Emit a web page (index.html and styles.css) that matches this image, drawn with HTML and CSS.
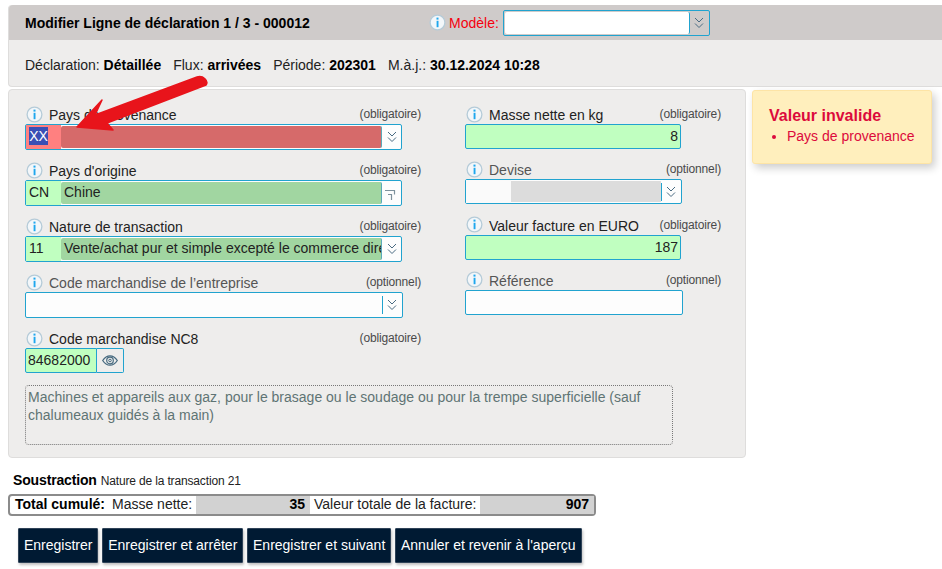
FILE: index.html
```html
<!DOCTYPE html>
<html lang="fr">
<head>
<meta charset="utf-8">
<title>Modifier Ligne de déclaration</title>
<link rel="stylesheet" href="styles.css">
</head>
<body>
<svg class="defs" width="0" height="0" aria-hidden="true">
  <symbol id="info" viewBox="0 0 17 17">
    <circle cx="8.5" cy="8.5" r="7.4" fill="#f3f7fa" stroke="#b5cbd8" stroke-width="1.3"/>
    <rect x="7.5" y="3.6" width="2" height="2" fill="#1ea7ee"/>
    <rect x="7.6" y="6.8" width="1.9" height="6.4" fill="#1ea7ee"/>
  </symbol>
  <symbol id="chev" viewBox="0 0 10 12">
    <path d="M1 1 5 5 9 1M1 6.500l4 4 4-4" fill="none" stroke="#4a6b82" stroke-width="1"/>
  </symbol>
  <symbol id="corner" viewBox="0 0 12 12">
    <path d="M1 1.500h9.500v4M4 5.500h3.500v5.500" fill="none" stroke="#7d919c" stroke-width="1.200"/>
  </symbol>
</svg>

<section class="head">
  <div class="head-title">
    <h1 class="title">Modifier Ligne de déclaration 1 / 3 - 000012</h1>
    <div class="model">
      <svg class="info"><use href="#info"/></svg>
      <span class="model-label">Modèle:</span>
      <div class="combo combo-model">
        <span class="model-input"></span>
        <span class="combo-btn"><svg class="chev"><use href="#chev"/></svg></span>
      </div>
    </div>
  </div>
  <p class="head-meta">
    <span>Déclaration: <b>Détaillée</b></span>
    <span>Flux: <b>arrivées</b></span>
    <span>Période: <b>202301</b></span>
    <span>M.à.j.: <b>30.12.2024 10:28</b></span>
  </p>
</section>

<div class="content">
  <section class="panel">
    <div class="cols">
      <div class="col col-left">
        <div class="field">
          <div class="label"><svg class="info"><use href="#info"/></svg><span class="name">Pays de provenance</span><span class="req">(obligatoire)</span></div>
          <div class="combo combo-wide">
            <span class="code code-bad"><span class="selected">XX</span></span>
            <span class="desc desc-bad"></span>
            <span class="combo-btn"><svg class="chev"><use href="#chev"/></svg></span>
          </div>
        </div>
        <div class="field">
          <div class="label"><svg class="info"><use href="#info"/></svg><span class="name">Pays d'origine</span><span class="req">(obligatoire)</span></div>
          <div class="combo combo-wide">
            <span class="code code-ok">CN</span>
            <span class="desc desc-ok">Chine</span>
            <span class="combo-btn"><svg class="corner"><use href="#corner"/></svg></span>
          </div>
        </div>
        <div class="field">
          <div class="label"><svg class="info"><use href="#info"/></svg><span class="name">Nature de transaction</span><span class="req">(obligatoire)</span></div>
          <div class="combo combo-wide">
            <span class="code code-ok">11</span>
            <span class="desc desc-ok">Vente/achat pur et simple excepté le commerce direct avec/par les consommateurs</span>
            <span class="combo-btn"><svg class="chev"><use href="#chev"/></svg></span>
          </div>
        </div>
        <div class="field">
          <div class="label label-opt"><svg class="info"><use href="#info"/></svg><span class="name">Code marchandise de l’entreprise</span><span class="req">(optionnel)</span></div>
          <div class="combo combo-wider combo-empty">
            <span class="blank"></span>
            <span class="combo-btn combo-btn-line"><svg class="chev"><use href="#chev"/></svg></span>
          </div>
        </div>
        <div class="field">
          <div class="label"><svg class="info"><use href="#info"/></svg><span class="name">Code marchandise NC8</span><span class="req">(obligatoire)</span></div>
          <div class="nc8">
            <span class="nc8-code">84682000</span>
            <span class="nc8-btn">
              <svg class="eye" viewBox="0 0 16 11" aria-hidden="true">
                <path d="M.7 5.500C3 2 5.500.8 8 .8s5 1.200 7.300 4.700C13 9 10.500 10.200 8 10.200S3 9 .7 5.500Z" fill="none" stroke="#46697f" stroke-width="1.300"/>
                <circle cx="8" cy="5.500" r="3.300" fill="none" stroke="#46697f" stroke-width="1.200"/>
                <circle cx="8" cy="5.500" r="1.300" fill="none" stroke="#46697f" stroke-width="1"/>
              </svg>
            </span>
          </div>
        </div>
      </div>
      <div class="col col-right">
        <div class="field-r">
          <div class="label"><svg class="info"><use href="#info"/></svg><span class="name">Masse nette en kg</span><span class="req">(obligatoire)</span></div>
          <div class="num">8</div>
        </div>
        <div class="field-r">
          <div class="label label-opt"><svg class="info"><use href="#info"/></svg><span class="name">Devise</span><span class="req">(optionnel)</span></div>
          <div class="combo combo-devise">
            <span class="dev-code"></span>
            <span class="dev-desc"></span>
            <span class="combo-btn combo-btn-line"><svg class="chev"><use href="#chev"/></svg></span>
          </div>
        </div>
        <div class="field-r">
          <div class="label"><svg class="info"><use href="#info"/></svg><span class="name">Valeur facture en EURO</span><span class="req">(obligatoire)</span></div>
          <div class="num">187</div>
        </div>
        <div class="field-r">
          <div class="label label-opt"><svg class="info"><use href="#info"/></svg><span class="name">Référence</span><span class="req">(optionnel)</span></div>
          <div class="text-input"></div>
        </div>
      </div>
    </div>
    <div class="note">Machines et appareils aux gaz, pour le brasage ou le soudage ou pour la trempe superficielle (sauf chalumeaux guidés à la main)</div>
  </section>

  <aside class="alert">
    <h2 class="alert-title">Valeur invalide</h2>
    <ul class="alert-list"><li>Pays de provenance</li></ul>
  </aside>
</div>

<p class="sub"><b class="sub-head">Soustraction</b> <span class="sub-text">Nature de la transaction 21</span></p>

<div class="totals">
  <b class="tot-label">Total cumulé:</b>
  <span class="tot-key tot-key-1">Masse nette:</span>
  <b class="tot-val tot-val-1">35</b>
  <span class="tot-key tot-key-2">Valeur totale de la facture:</span>
  <b class="tot-val tot-val-2">907</b>
</div>

<div class="actions">
  <button class="btn" type="button">Enregistrer</button>
  <button class="btn" type="button">Enregistrer et arrêter</button>
  <button class="btn" type="button">Enregistrer et suivant</button>
  <button class="btn" type="button">Annuler et revenir à l'aperçu</button>
</div>

<svg class="arrow" viewBox="0 0 150 60" aria-hidden="true">
  <path d="M11 52 36 25 29 40 131 2C137 0 143 6 140 10L41 48 47 55Z" fill="#e8141b" stroke="#e8141b" stroke-width="1.500" stroke-linejoin="round"/>
</svg>
</body>
</html>
```
FILE: styles.css
```css
* { box-sizing: border-box; }
html, body { margin: 0; padding: 0; }
body {
  position: relative;
  width: 942px;
  height: 569px;
  overflow: hidden;
  padding: 5px 0 0 8px;
  background: #fff;
  color: #000;
  font-family: "Liberation Sans", Arial, sans-serif;
  font-size: 14px;
}
.defs { position: absolute; }

.head {
  height: 82px;
  background: #eeedec;
  border-radius: 4px 0 0 4px;
  border-bottom: 1px solid #dedddc;
  border-left: 1px solid #dedddc;
}
.head-title {
  display: flex;
  align-items: center;
  height: 35px;
  padding-left: 16px;
  background: #cfcbca;
  border-radius: 4px 0 0 0;
}
.title {
  margin: 0;
  width: 404px;
  font-size: 14px;
  font-weight: bold;
}
.model { display: flex; align-items: center; }
.model .info { margin-right: 3px; }
.model-label { margin-right: 4px; color: #f5000e; }
.head-meta {
  display: flex;
  gap: 12px;
  margin: 0;
  padding: 17px 0 0 16px;
  line-height: 16px;
  color: #222;
}
.head-meta b { color: #000; }

.info { width: 17px; height: 17px; flex: none; }
.chev { width: 10px; height: 12px; }
.corner { width: 12px; height: 12px; margin: 3px 3px 0 0; }

.content {
  display: flex;
  align-items: flex-start;
  margin-top: 2px;
}
.panel {
  width: 738px;
  height: 369px;
  padding: 14px 0 0 16px;
  background: #eeedec;
  border: 1px solid #dedddc;
  border-radius: 4px;
}
.cols { display: flex; height: 281px; }
.col-left { width: 396px; margin-right: 44px; }
.col-right { width: 256px; }
.field { height: 56px; }
.field-r { height: 55.300px; }

.label {
  display: flex;
  align-items: center;
  width: 396px;
  height: 20px;
  color: #222;
}
.col-right .label { width: 256px; }
.label .info { margin-left: 1px; margin-right: 6px; }
.name { flex: 1; padding-top: 2px; white-space: nowrap; }
.req { font-size: 12px; letter-spacing: -.15px; color: #4a4a4a; }
.label-opt { color: #555; }

.combo {
  display: flex;
  height: 26px;
  border: 1px solid #21a3cf;
  border-radius: 2px;
  background: #fdfdfd;
}
.combo-wide { width: 377px; }
.combo-wider { width: 378px; }
.code {
  width: 35px;
  height: 100%;
  padding-left: 3px;
  line-height: 22px;
  font-size: 14px;
}
.code-ok { background: #c0ffc0; color: #222; }
.code-bad { background: #ff8080; }
.selected {
  display: inline-block;
  width: 19px;
  margin-top: 2px;
  background: #3a4fb5;
  color: #fff;
  text-align: center;
  line-height: 18px;
  vertical-align: top;
}
.desc {
  width: 321px;
  height: 22px;
  margin-top: 1px;
  padding-left: 3px;
  overflow: hidden;
  white-space: nowrap;
  line-height: 20px;
  border-radius: 2px;
  border-right: 1px solid #5aa9b8;
}
.desc-bad { background: #d66a6a; }
.desc-ok { background: #a1d6a1; color: #222; }
.combo-btn {
  display: flex;
  flex: 1;
  align-items: center;
  justify-content: center;
}
.blank { flex: none; width: 356px; }
.combo-btn-line { position: relative; }
.combo-btn-line::before {
  content: "";
  position: absolute;
  left: 0;
  top: 3px;
  height: 18px;
  border-left: 1px solid #21a3cf;
}

.combo-model { width: 207px; height: 26px; background: #cfcbca; }
.model-input {
  width: 185px;
  height: 22px;
  margin: 1px 0 0 1px;
  background: #fff;
  border-radius: 2px;
  border-right: 1px solid #21a3cf;
}

.num {
  width: 216px;
  height: 25px;
  padding-right: 2px;
  border: 1px solid #21a3cf;
  border-radius: 2px;
  background: #c0ffc0;
  text-align: right;
  line-height: 23px;
  color: #222;
}
.combo-devise { width: 217px; height: 25px; }
.dev-code { width: 45px; background: #fafafa; }
.dev-desc { width: 150px; background: #dcdcdc; margin: 1px 0; }
.text-input {
  width: 218px;
  height: 25px;
  border: 1px solid #21a3cf;
  border-radius: 2px;
  background: #fdfdfd;
}

.nc8 { display: flex; height: 25px; }
.nc8-code {
  width: 72px;
  border: 1px solid #21a3cf;
  border-radius: 2px 0 0 2px;
  background: #c0ffc0;
  line-height: 23px;
  padding-left: 2px;
  color: #222;
}
.nc8-btn {
  display: flex;
  align-items: center;
  justify-content: center;
  width: 27px;
  border: 1px solid #21a3cf;
  border-left: 0;
  border-radius: 0 2px 2px 0;
}
.eye { width: 16px; height: 11px; }

.note {
  width: 648px;
  height: 60px;
  padding: 2px;
  border: 1px dotted #777;
  border-radius: 4px;
  color: #5f7474;
  line-height: 18px;
}

.alert {
  width: 180px;
  height: 74px;
  margin: 1px 0 0 6px;
  padding: 16px 16px 0;
  background: #ffefbd;
  border: 1px solid #fde4a6;
  border-radius: 3px;
  box-shadow: 3px 4px 8px rgba(0,0,0,.2);
  color: #dc0a3c;
}
.alert-title { margin: 0; font-size: 16px; line-height: 18px; font-weight: bold; }
.alert-list { margin: 2px 0 0; padding: 0 0 0 18px; line-height: 18px; }

.sub { margin: 14px 0 0 5px; line-height: 16px; color: #222; }
.sub-head { color: #000; letter-spacing: -.15px; }
.sub-text { font-size: 12px; letter-spacing: -.15px; }

.totals {
  display: flex;
  align-items: center;
  width: 588px;
  height: 22px;
  margin-top: 5px;
  padding-bottom: 2px;
  border: 2px solid #8b8b8b;
  border-radius: 4px;
  background: #fff;
}
.tot-label { margin-left: 5px; width: 97px; }
.tot-key { color: #222; }
.tot-key-1 { width: 84px; }
.tot-val {
  align-self: stretch;
  margin-bottom: -2px;
  padding-right: 5px;
  background: #d2d2d2;
  text-align: right;
  line-height: 17px;
}
.tot-val-1 { width: 114px; }
.tot-key-2 { width: 170px; padding-left: 4px; }
.tot-val-2 { flex: 1; }

.actions {
  display: flex;
  gap: 3.700px;
  margin: 12px 0 0 10px;
}
.btn {
  height: 35px;
  padding: 0 5px 2px;
  border: 1px solid #2f4358;
  border-radius: 1px;
  background: #001a33;
  color: #fff;
  font: 14px "Liberation Sans", Arial, sans-serif;
  box-shadow: 1px 2px 3px rgba(0,0,0,.25);
}

.arrow {
  position: absolute;
  left: 66px;
  top: 75px;
  width: 150px;
  height: 60px;
  pointer-events: none;
}
```
